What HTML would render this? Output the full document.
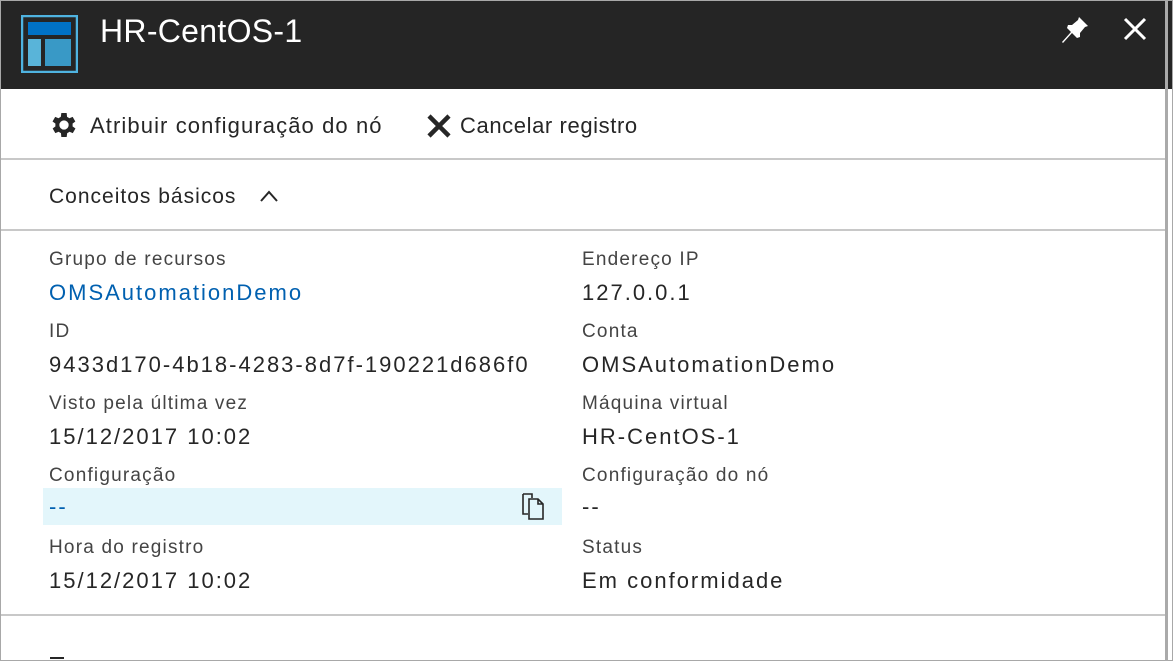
<!DOCTYPE html>
<html><head><meta charset="utf-8"><style>
body{margin:0;width:1173px;height:661px;overflow:hidden;background:#fff;font-family:"Liberation Sans",sans-serif;color:#262626;position:relative}
.a{position:absolute;white-space:nowrap}
.l{font-size:19px;color:#444;letter-spacing:1.2px}
.v{font-size:22px;color:#262626;letter-spacing:2px}
.hr{position:absolute;left:1px;width:1164px;height:2px;background:#c8c8c8}
</style></head><body>
<div class="a" style="left:0;top:0;width:1173px;height:661px;box-sizing:border-box;border:1px solid #a8a8a8"></div>
<div class="a" style="left:1px;top:1px;width:1171px;height:88px;background:#252525"></div>
<div class="a" style="left:1165px;top:1px;width:3px;height:660px;background:#aaa"></div>
<div class="a" style="left:1168px;top:89px;width:4px;height:571px;background:#fff"></div>
<svg class="a" style="left:21px;top:15px" width="57" height="58"><rect x="1" y="1" width="55" height="56" fill="#252525" stroke="#4fb3e0" stroke-width="2.5"/><rect x="7" y="7" width="43" height="13" fill="#0072c6"/><rect x="7" y="24" width="13" height="27" fill="#59b4d9"/><rect x="24" y="24" width="26" height="27" fill="#3999c6"/></svg>
<div class="a" style="left:100px;top:13px;font-size:32px;color:#fff;letter-spacing:0.3px">HR-CentOS-1</div>
<svg class="a" style="left:1060px;top:15px" width="30" height="30" viewBox="0 0 30 30"><path d="M19 2 L28 11 L25 12 L20 18 L20 22 L17 23 L12 18 L3 28 L2 27 L11 17 L7 13 L8 10 L12 10 L18 5 Z" fill="#fff"/></svg>
<svg class="a" style="left:1123px;top:17px" width="24" height="24"><path d="M2 2L22 22M22 2L2 22" stroke="#fff" stroke-width="3"/></svg>
<svg class="a" style="left:48px;top:109px" width="32" height="32" viewBox="0 0 24 24"><path fill="#262626" d="M19.4 13a7.5 7.5 0 000-2l2.1-1.6-2-3.5-2.5 1a7.4 7.4 0 00-1.7-1L15 3h-4l-.4 2.9a7.4 7.4 0 00-1.7 1l-2.5-1-2 3.5L6.6 11a7.5 7.5 0 000 2l-2.1 1.6 2 3.5 2.5-1a7.4 7.4 0 001.7 1L11 21h4l.4-2.9a7.4 7.4 0 001.7-1l2.5 1 2-3.5zM13 15.5A3.5 3.5 0 1113 8.5a3.5 3.5 0 010 7z" transform="translate(-1 0)"/></svg>
<div class="a" style="left:90px;top:113px;font-size:22px;letter-spacing:1.1px">Atribuir configuração do nó</div>
<svg class="a" style="left:426px;top:113px" width="26" height="26"><path d="M3 3L23 23M23 3L3 23" stroke="#262626" stroke-width="4.5"/></svg>
<div class="a" style="left:460px;top:113px;font-size:22px;letter-spacing:0.6px">Cancelar registro</div>
<div class="hr" style="top:158px"></div>
<div class="a" style="left:49px;top:185px;font-size:21px;letter-spacing:1px">Conceitos básicos</div>
<svg class="a" style="left:259px;top:189px" width="20" height="14"><path d="M2 12L10 3L18 12" stroke="#262626" stroke-width="2" fill="none"/></svg>
<div class="hr" style="top:229px"></div>
<div class="a l" style="left:49px;top:249px">Grupo de recursos</div>
<div class="a v" style="left:49px;top:280px;color:#0060b0">OMSAutomationDemo</div>
<div class="a l" style="left:49px;top:321px">ID</div>
<div class="a v" style="left:49px;top:352px">9433d170-4b18-4283-8d7f-190221d686f0</div>
<div class="a l" style="left:49px;top:393px">Visto pela última vez</div>
<div class="a v" style="left:49px;top:424px">15/12/2017 10:02</div>
<div class="a l" style="left:49px;top:465px">Configuração</div>
<div class="a" style="left:43px;top:488px;width:519px;height:37px;background:#e3f6fb"></div>
<div class="a v" style="left:49px;top:494px;color:#0060b0">--</div>
<svg class="a" style="left:520px;top:492px" width="30" height="30"><path d="M3 2h9v4M3 2v20h5" stroke="#262626" stroke-width="1.6" fill="none"/><path d="M9 7h9l5 5v15H9z M18 7v5h5" stroke="#262626" stroke-width="1.6" fill="none"/></svg>
<div class="a l" style="left:49px;top:537px">Hora do registro</div>
<div class="a v" style="left:49px;top:568px">15/12/2017 10:02</div>
<div class="a l" style="left:582px;top:249px">Endereço IP</div>
<div class="a v" style="left:582px;top:280px">127.0.0.1</div>
<div class="a l" style="left:582px;top:321px">Conta</div>
<div class="a v" style="left:582px;top:352px">OMSAutomationDemo</div>
<div class="a l" style="left:582px;top:393px">Máquina virtual</div>
<div class="a v" style="left:582px;top:424px">HR-CentOS-1</div>
<div class="a l" style="left:582px;top:465px">Configuração do nó</div>
<div class="a v" style="left:582px;top:494px">--</div>
<div class="a l" style="left:582px;top:537px">Status</div>
<div class="a v" style="left:582px;top:568px">Em conformidade</div>
<div class="hr" style="top:614px"></div>
<div class="a" style="left:50px;top:657px;width:14px;height:2px;background:#262626"></div>
</body></html>
